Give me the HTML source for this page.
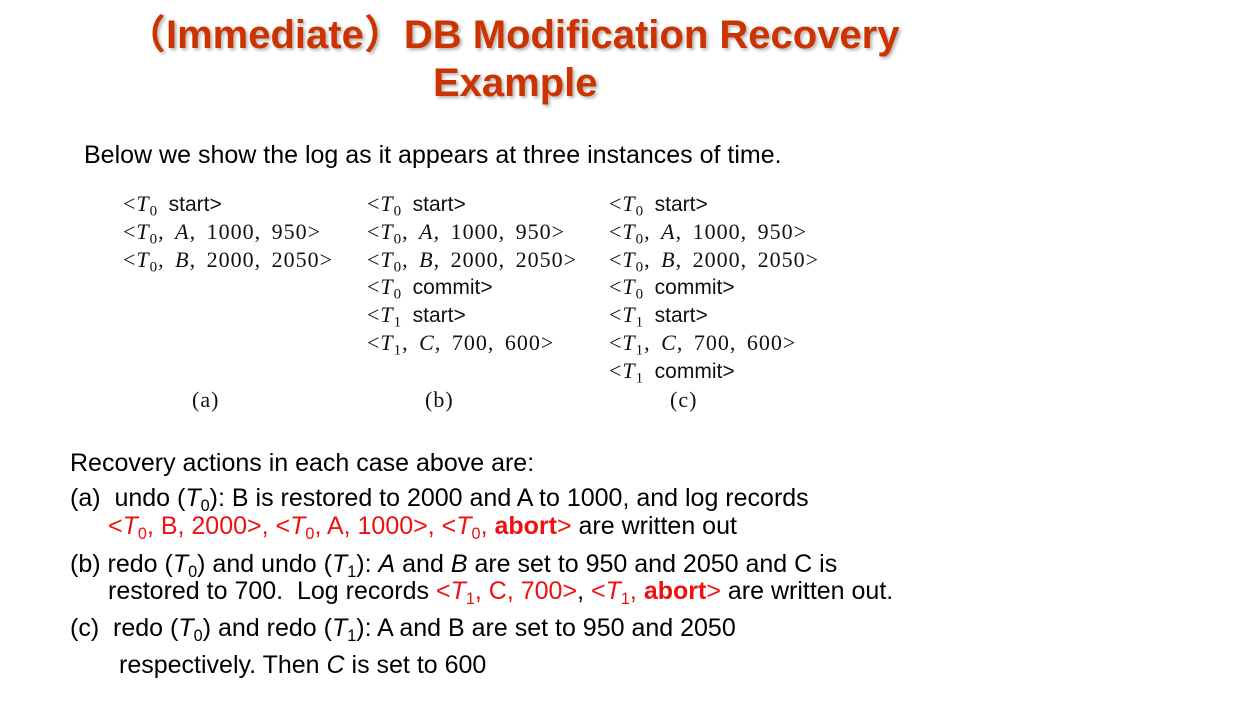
<!DOCTYPE html>
<html><head><meta charset="utf-8"><style>
body{margin:0;width:1254px;height:706px;background:#fff;position:relative;overflow:hidden;font-family:"Liberation Sans",Arial,sans-serif;}
.t{position:absolute;white-space:nowrap;color:#cc3300;font-weight:bold;font-size:40px;text-shadow:2px 2px 3px rgba(0,0,0,0.3);line-height:1;}
.a{position:absolute;white-space:nowrap;line-height:1;}
.log{position:absolute;font-family:"Liberation Serif",serif;font-size:22px;line-height:27.3px;white-space:nowrap;color:#111;letter-spacing:1px;word-spacing:4px;}
.log .s{font-family:"Liberation Sans",sans-serif;font-size:21px;letter-spacing:0;word-spacing:0;}
.log i sub{font-style:normal;font-size:15px;}
sub{font-size:0.65em;vertical-align:-0.3em;line-height:0;}
.b{font-size:25px;color:#000;}
.r{color:#ee1111;}
</style></head><body>
<div class="t" style="left:126px;top:15px;font-family:'Liberation Sans','Noto Sans CJK SC',sans-serif;">（Immediate）DB Modification Recovery</div>
<div class="t" style="left:433px;top:63px;">Example</div>
<div class="a" style="left:84px;top:143px;font-size:25px;">Below we show the log as it appears at three instances of time.</div>

<div class="log" style="left:123px;top:190px;">
&lt;<i>T<sub>0</sub></i> <span class="s">start&gt;</span><br>
&lt;<i>T<sub>0</sub></i>, <i>A</i>, 1000, 950&gt;<br>
&lt;<i>T<sub>0</sub></i>, <i>B</i>, 2000, 2050&gt;</div>
<div class="log" style="left:367px;top:190px;">
&lt;<i>T<sub>0</sub></i> <span class="s">start&gt;</span><br>
&lt;<i>T<sub>0</sub></i>, <i>A</i>, 1000, 950&gt;<br>
&lt;<i>T<sub>0</sub></i>, <i>B</i>, 2000, 2050&gt;<br>
&lt;<i>T<sub>0</sub></i> <span class="s">commit&gt;</span><br>
&lt;<i>T<sub>1</sub></i> <span class="s">start&gt;</span><br>
&lt;<i>T<sub>1</sub></i>, <i>C</i>, 700, 600&gt;</div>
<div class="log" style="left:609px;top:190px;">
&lt;<i>T<sub>0</sub></i> <span class="s">start&gt;</span><br>
&lt;<i>T<sub>0</sub></i>, <i>A</i>, 1000, 950&gt;<br>
&lt;<i>T<sub>0</sub></i>, <i>B</i>, 2000, 2050&gt;<br>
&lt;<i>T<sub>0</sub></i> <span class="s">commit&gt;</span><br>
&lt;<i>T<sub>1</sub></i> <span class="s">start&gt;</span><br>
&lt;<i>T<sub>1</sub></i>, <i>C</i>, 700, 600&gt;<br>
&lt;<i>T<sub>1</sub></i> <span class="s">commit&gt;</span></div>
<div class="log" style="left:192px;top:386px;">(a)</div>
<div class="log" style="left:425px;top:386px;">(b)</div>
<div class="log" style="left:670px;top:386px;">(c)</div>

<div class="a b" style="left:70px;top:451px;">Recovery actions in each case above are:</div>
<div class="a b" style="left:70px;top:486px;">(a)&nbsp; undo (<i>T</i><sub>0</sub>): B is restored to 2000 and A to 1000, and log records</div>
<div class="a b" style="left:108px;top:514px;"><span class="r">&lt;<i>T</i><sub>0</sub>, B, 2000&gt;, &lt;<i>T</i><sub>0</sub>, A, 1000&gt;, &lt;<i>T</i><sub>0</sub>, <b>abort</b>&gt;</span> are written out</div>
<div class="a b" style="left:70px;top:552px;">(b) redo (<i>T</i><sub>0</sub>) and undo (<i>T</i><sub>1</sub>): <i>A</i> and <i>B</i> are set to 950 and 2050 and C is</div>
<div class="a b" style="left:108px;top:579px;">restored to 700.&nbsp; Log records <span class="r">&lt;<i>T</i><sub>1</sub>, C, 700&gt;</span>, <span class="r">&lt;<i>T</i><sub>1</sub>, <b>abort</b>&gt;</span> are written out.</div>
<div class="a b" style="left:70px;top:616px;">(c)&nbsp; redo (<i>T</i><sub>0</sub>) and redo (<i>T</i><sub>1</sub>): A and B are set to 950 and 2050</div>
<div class="a b" style="left:119px;top:653px;">respectively. Then <i>C</i> is set to 600</div>
</body></html>
